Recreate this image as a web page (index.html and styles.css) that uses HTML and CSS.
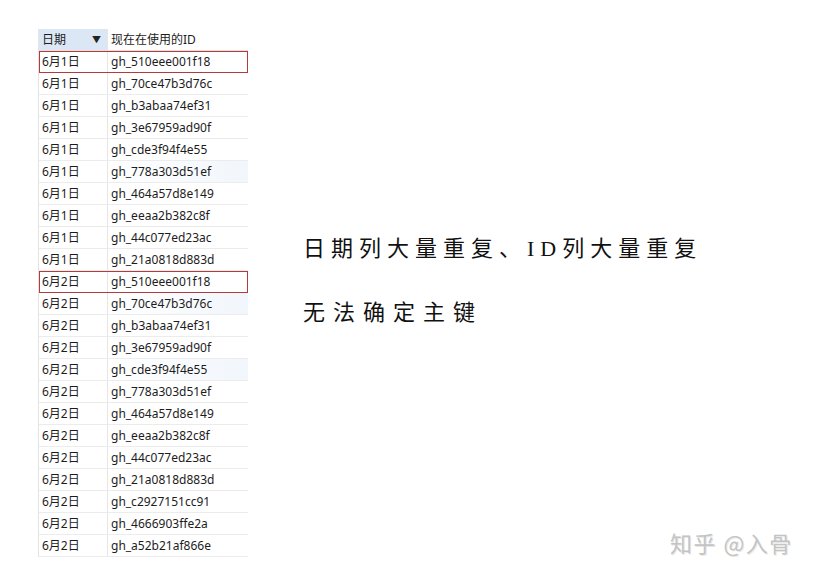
FILE: index.html
```html
<!DOCTYPE html>
<html>
<head>
  <meta charset="utf-8">
  <link rel="stylesheet" href="styles.css">
</head>
<body>
  <div class="page">
    <div class="sheet">
      <div class="row head">
        <div class="cell date-head">日期<span class="arrow">▼</span></div>
        <div class="cell">现在在使用的ID</div>
      </div>
      <div class="row marked"><div class="cell">6月1日</div><div class="cell">gh_510eee001f18</div></div>
      <div class="row"><div class="cell">6月1日</div><div class="cell">gh_70ce47b3d76c</div></div>
      <div class="row"><div class="cell">6月1日</div><div class="cell">gh_b3abaa74ef31</div></div>
      <div class="row"><div class="cell">6月1日</div><div class="cell">gh_3e67959ad90f</div></div>
      <div class="row"><div class="cell">6月1日</div><div class="cell">gh_cde3f94f4e55</div></div>
      <div class="row tint"><div class="cell">6月1日</div><div class="cell">gh_778a303d51ef</div></div>
      <div class="row"><div class="cell">6月1日</div><div class="cell">gh_464a57d8e149</div></div>
      <div class="row"><div class="cell">6月1日</div><div class="cell">gh_eeaa2b382c8f</div></div>
      <div class="row"><div class="cell">6月1日</div><div class="cell">gh_44c077ed23ac</div></div>
      <div class="row"><div class="cell">6月1日</div><div class="cell">gh_21a0818d883d</div></div>
      <div class="row marked"><div class="cell">6月2日</div><div class="cell">gh_510eee001f18</div></div>
      <div class="row tint"><div class="cell">6月2日</div><div class="cell">gh_70ce47b3d76c</div></div>
      <div class="row"><div class="cell">6月2日</div><div class="cell">gh_b3abaa74ef31</div></div>
      <div class="row"><div class="cell">6月2日</div><div class="cell">gh_3e67959ad90f</div></div>
      <div class="row tint"><div class="cell">6月2日</div><div class="cell">gh_cde3f94f4e55</div></div>
      <div class="row"><div class="cell">6月2日</div><div class="cell">gh_778a303d51ef</div></div>
      <div class="row"><div class="cell">6月2日</div><div class="cell">gh_464a57d8e149</div></div>
      <div class="row"><div class="cell">6月2日</div><div class="cell">gh_eeaa2b382c8f</div></div>
      <div class="row"><div class="cell">6月2日</div><div class="cell">gh_44c077ed23ac</div></div>
      <div class="row"><div class="cell">6月2日</div><div class="cell">gh_21a0818d883d</div></div>
      <div class="row"><div class="cell">6月2日</div><div class="cell">gh_c2927151cc91</div></div>
      <div class="row"><div class="cell">6月2日</div><div class="cell">gh_4666903ffe2a</div></div>
      <div class="row"><div class="cell">6月2日</div><div class="cell">gh_a52b21af866e</div></div>
    </div>

    <div class="notes">
      <p class="note">日期列大量重复、ID列大量重复</p>
      <p class="note wide">无法确定主键</p>
    </div>
  </div>

  <div class="watermark">知乎 @入骨</div>
</body>
</html>
```

FILE: styles.css
```css
body {
  margin: 0;
  background: #fff;
  font-family: "Noto Sans", "Noto Sans CJK SC", sans-serif;
  color: #1c1c1c;
  width: 819px;
  height: 575px;
  position: relative;
  overflow: hidden;
}

.page {
  display: flex;
  padding: 29px 0 0 39px;
}

.sheet {
  display: flex;
  flex-direction: column;
  width: 209px;
  border-left: 1px solid #e4e4e4;
  margin-left: -1px;
}

.row {
  display: grid;
  grid-template-columns: 69px 140px;
  height: 22px;
  border-bottom: 1px solid #ececec;
  box-sizing: border-box;
  font-size: 12px;
  line-height: 21px;
}

.row.head {
  height: 22px;
  border-bottom: 1px solid #e0e0e0;
}

.cell {
  padding-left: 3px;
  border-right: 1px solid #e6e6e6;
  white-space: nowrap;
}

.cell:last-child {
  border-right: none;
}

.date-head {
  background: #dbe7f4;
  display: flex;
  justify-content: space-between;
  padding-right: 6px;
}

.arrow {
  font-size: 9px;
  color: #222;
}

.row.marked {
  outline: 1px solid #b53a3a;
  outline-offset: -1px;
  position: relative;
}

.row.tint .cell:last-child {
  background: linear-gradient(90deg, #ffffff, #f1f6fc);
}

.notes {
  display: flex;
  flex-direction: column;
  gap: 39px;
  padding: 207px 0 0 55px;
}

.note {
  margin: 0;
  font-family: "Liberation Serif", "Noto Sans CJK SC", serif;
  font-size: 22px;
  line-height: 25px;
  letter-spacing: 6px;
  color: #111;
}

.note.wide {
  letter-spacing: 8px;
}

.watermark {
  position: absolute;
  left: 670px;
  top: 526px;
  font-family: "Noto Sans CJK SC", sans-serif;
  font-size: 22px;
  letter-spacing: 1.5px;
  color: #c4c4c4;
  text-shadow: 1px 1px 0 #e8e8e8;
}
```
